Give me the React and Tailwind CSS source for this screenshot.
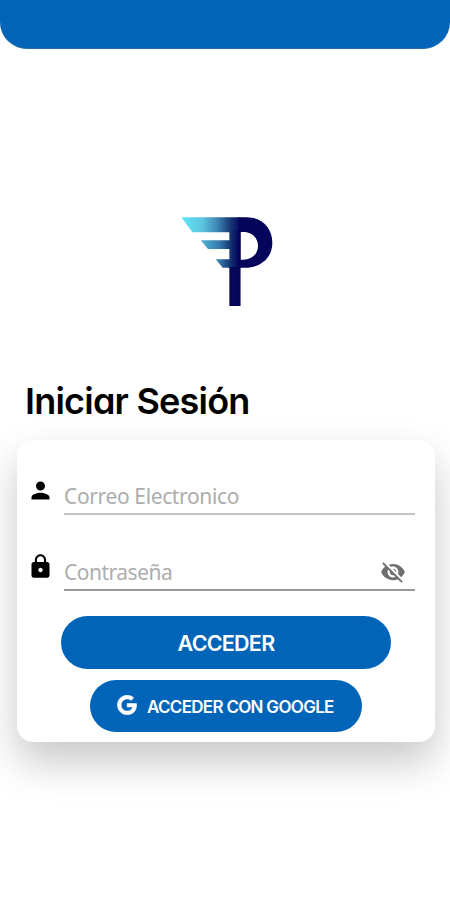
import { useState } from 'react';
import { MdPerson, MdLock, MdVisibility, MdVisibilityOff } from 'react-icons/md';
import { FaGoogle } from 'react-icons/fa';

function Logo() {
  return (
    <svg viewBox="0 0 345 330" className="w-[115px] h-[110px]" aria-hidden="true">
      <defs>
        <linearGradient id="wing" gradientUnits="userSpaceOnUse" x1="36" y1="0" x2="212" y2="0">
          <stop offset="0" stopColor="#62e6f4" />
          <stop offset="0.35" stopColor="#5cc4de" />
          <stop offset="0.6" stopColor="#3d86b4" />
          <stop offset="0.82" stopColor="#1a3a78" />
          <stop offset="1" stopColor="#04045a" />
        </linearGradient>
        <linearGradient id="wingLow" gradientUnits="userSpaceOnUse" x1="92" y1="0" x2="206" y2="0">
          <stop offset="0" stopColor="#56b4d4" />
          <stop offset="0.5" stopColor="#3279aa" />
          <stop offset="0.8" stopColor="#14306e" />
          <stop offset="1" stopColor="#04045a" />
        </linearGradient>
      </defs>
      <path fill="url(#wing)" d="M34 37H212V82H67Z" />
      <path fill="url(#wingLow)" d="M178 78H211V190H178Z" />
      <path fill="url(#wingLow)" d="M92 106H180V132H114Z" />
      <path fill="url(#wingLow)" d="M137 163H180V188H158Z" />
      <path fill="#06065a" d="M178 186H211V303H178Z" />
      <path
        fill="#04045a"
        fillRule="evenodd"
        d="M206 37H232C278 38 307 70 307 113C307 158 273 188 226 188H211V303H206ZM212 81V164H220C247 163 264 146 264 123C264 99 246 81 220 81Z"
      />
    </svg>
  );
}

export default function App() {
  const [visible, setVisible] = useState(false);
  const EyeIcon = visible ? MdVisibility : MdVisibilityOff;

  return (
    <div className="flex h-[900px] w-[450px] flex-col overflow-hidden bg-white">
      <header className="h-[49px] shrink-0 rounded-b-[27px] border-b border-[#2a6fae] bg-[#0065b9]" />

      <div className="mt-[156px] flex justify-center pl-[5px]">
        <Logo />
      </div>

      <h1 className="mt-[64px] ml-[25px] h-[44px] whitespace-nowrap font-['Inter',sans-serif] text-[36px] leading-[44px] font-semibold tracking-[-0.78px] text-black [font-feature-settings:'cv11']">
        Iniciar Sesión
      </h1>

      <form
        onSubmit={(e) => e.preventDefault()}
        className="mt-[17px] ml-[17px] flex h-[302px] w-[418px] shrink-0 flex-col rounded-[16px] bg-white pr-[20px] pl-[10px] shadow-[0_20px_40px_rgba(0,0,0,0.22)]"
      >
        <label className="mt-[36px] flex h-[39px]">
          <MdPerson className="mt-[1px] size-[27px] shrink-0 text-black" />
          <input
            type="email"
            placeholder="Correo Electronico"
            className="ml-[10px] h-[39px] min-w-0 flex-1 border-b-2 border-[#c4c4c4] bg-transparent pt-[2px] font-['Noto_Sans',sans-serif] text-[21px] tracking-[-0.37px] text-black outline-none placeholder:text-[#adadad]"
          />
        </label>

        <label className="mt-[36px] flex h-[40px]">
          <MdLock className="mt-[2px] size-[27px] shrink-0 text-black" />
          <span className="ml-[10px] flex h-[40px] flex-1 items-center border-b-2 border-[#999999] pt-[4px]">
            <input
              type={visible ? 'text' : 'password'}
              placeholder="Contraseña"
              className="min-w-0 flex-1 bg-transparent pt-[2px] font-['Noto_Sans',sans-serif] text-[21px] tracking-[-0.5px] text-black outline-none placeholder:text-[#adadad]"
            />
            <button type="button" onClick={() => setVisible(!visible)} className="mr-[9px]">
              <EyeIcon className="size-[26px] text-[#707070]" />
            </button>
          </span>
        </label>

        <button
          type="submit"
          className="mt-[25px] ml-[34px] h-[53px] w-[330px] shrink-0 rounded-full bg-[#0065b9] pt-[2px] font-['Inter',sans-serif] text-[21.5px] font-semibold tracking-[-0.75px] text-white"
        >
          ACCEDER
        </button>
        <button
          type="button"
          className="mt-[11px] ml-[63px] flex h-[52px] w-[272px] shrink-0 items-center rounded-full bg-[#0065b9] pl-[27px] font-['Inter',sans-serif] text-[17px] font-semibold tracking-[-0.7px] whitespace-nowrap text-white"
        >
          <FaGoogle className="mr-[10px] mb-[2px] size-[20px] shrink-0 stroke-[16]" />
          <span className="pt-[3px]">ACCEDER CON GOOGLE</span>
        </button>
      </form>
    </div>
  );
}
